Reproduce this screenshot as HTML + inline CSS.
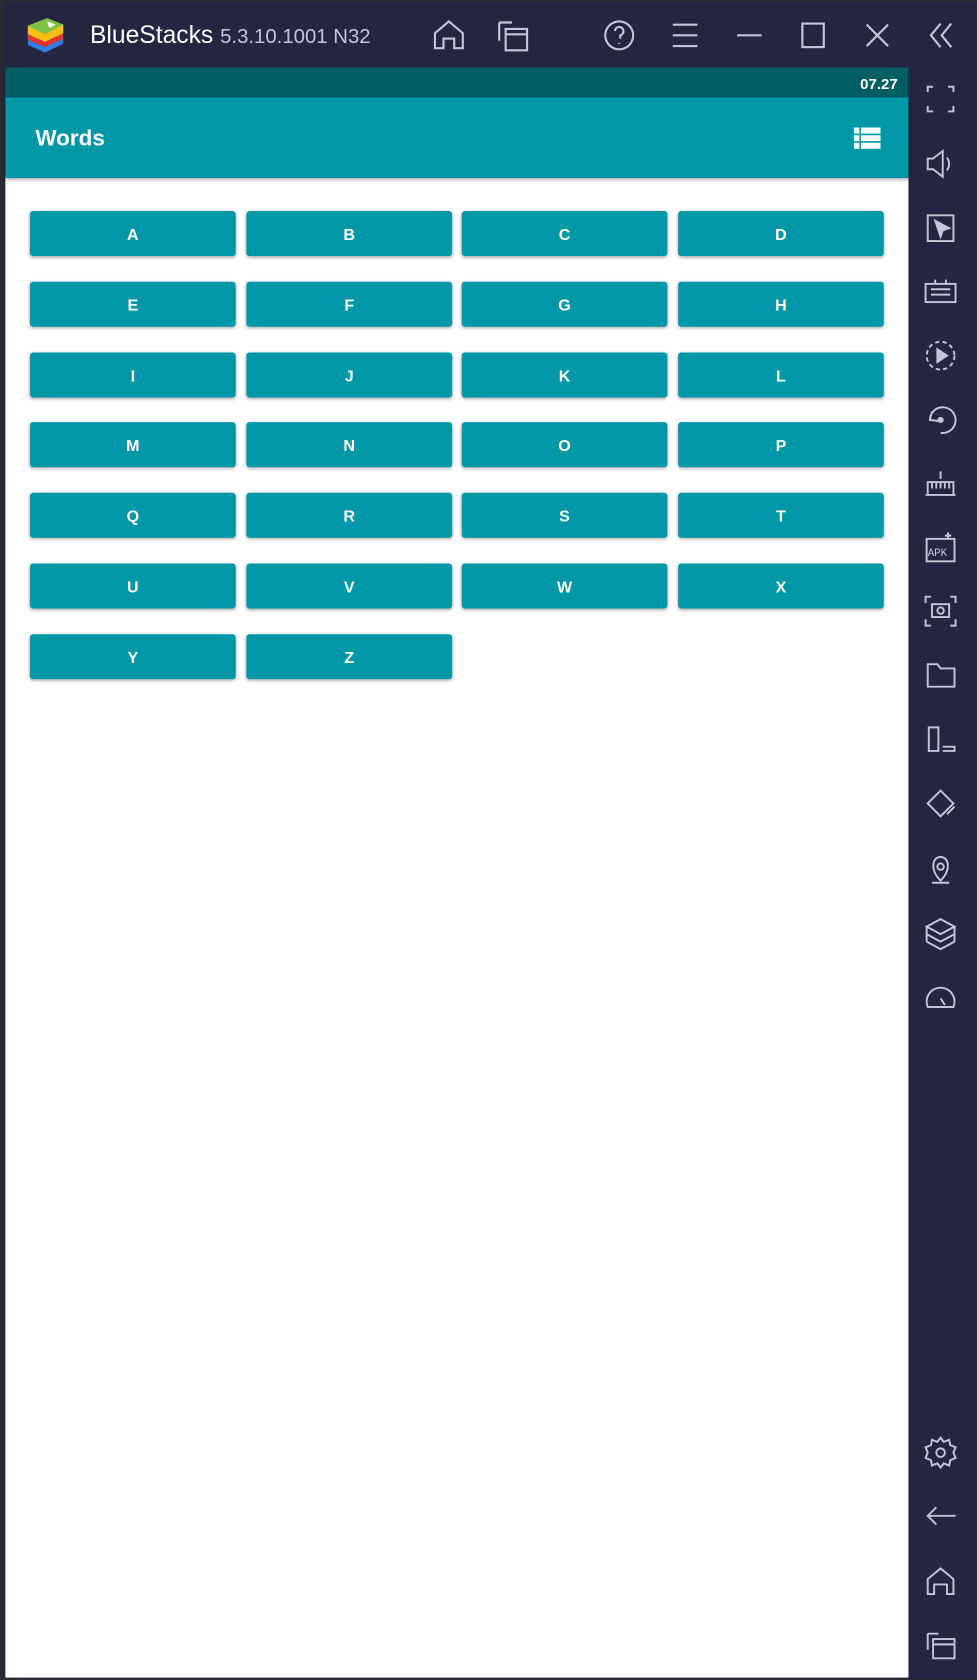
<!DOCTYPE html>
<html><head><meta charset="utf-8"><style>
html,body{margin:0;padding:0;width:977px;height:1679px;overflow:hidden;background:#2a2a30;}
#w{position:absolute;left:0;top:0;width:912px;height:1568px;transform:scale(1.07127);transform-origin:0 0;font-family:"Liberation Sans",sans-serif;}
.win{position:absolute;left:3px;top:2px;width:909px;height:1565px;background:#232541;}
.ic{position:absolute;}
.ic svg{display:block}
.status{position:absolute;left:5px;top:63px;width:843px;height:28px;background:#005f63;color:#fff;font-weight:bold;font-size:14px;text-align:right;line-height:30px;box-sizing:border-box;padding-right:10px;}
.bar{position:absolute;left:5px;top:91px;width:843px;height:75px;background:#0097a7;box-shadow:0 2px 3px rgba(0,0,0,.3);z-index:2}
.bar .t{position:absolute;left:28px;top:27px;color:#fff;font-size:21px;font-weight:bold;}
.content{position:absolute;left:5px;top:166px;width:843px;height:1400px;background:#fff;}
.b{position:absolute;width:192px;height:42px;background:#0097a7;border-radius:3px;box-shadow:0 1px 3px rgba(0,0,0,.35);color:#fff;font-size:15px;font-weight:bold;text-align:center;line-height:46px;}
</style></head><body><div id="w">
<div class="win"></div>
<svg class="ic" style="left:22px;top:14px" width="40" height="38" viewBox="0 0 40 38">
<path d="M4 10 L22 3 L37 9 L37 27 L20 35 L4 28Z" fill="#2e7de0"/>
<path d="M4 10 L22 3 L37 9 L37 22 L20 30 L4 23Z" fill="#e3342f"/>
<path d="M4 10 L22 3 L37 9 L37 17 L20 25 L4 18Z" fill="#f5c013"/>
<path d="M4 10 L22 3 L37 9 L20 18Z" fill="#7cc242"/>
<path d="M22 6 L30 9 L24 12Z" fill="#fff"/>
</svg>
<div style="position:absolute;left:84px;top:19px;color:#fff;font-size:23px;">BlueStacks <span style="font-size:19px;color:#c3c5d6">5.3.10.1001 N32</span></div>
<svg class="ic" style="left:400px;top:12px" width="500" height="42" viewBox="400 12 500 42" fill="none" stroke="#c3c5d6" stroke-width="2">
<path d="M406 45 V31 L419 20 L432 31 V45 H424 V36 H414 V45Z"/>
<path d="M466 21 H478 M466 21 V38 M472 27 H492 V47 H472Z M472 32 H492"/>
<circle cx="578" cy="33" r="13"/><path d="M574 29 a4 4 0 1 1 5 4 v3 M578 40 v1"/>
<path d="M628 23 H651 M628 33 H651 M628 43 H651"/>
<path d="M688 33 H711"/>
<rect x="749" y="22" width="20" height="22"/>
<path d="M809 23 L829 43 M829 23 L809 43"/>
<path d="M878 22 L869 33 L878 44 M888 22 L879 33 L888 44"/>
</svg>
<div class="status">07.27</div>
<div class="bar"><div class="t">Words</div>
<svg class="ic" style="left:792px;top:28px" width="25" height="20" viewBox="0 0 25 20"><rect x="0" y="0" width="25" height="20" fill="#fff"/><path d="M0 6.5H25M0 13.5H25M6 0V20" stroke="#0097a7" stroke-width="1.5"/></svg>
</div>
<div class="content"></div>
<div id="btns"></div>
<svg class="ic" style="left:849px;top:63px" width="63" height="1505" viewBox="849 63 63 1505" fill="none" stroke="#c3c5d6" stroke-width="1.8">
<path d="M866 86 V81 H871 M885 81 H890 V86 M890 99 V104 H885 M871 104 H866 V99"/>
<path d="M866 148 H871 L880 141 V165 L871 158 H866Z M884 147 Q888 153 884 159"/>
<rect x="866" y="201" width="24" height="24"/><path d="M873 206 L886 213 L880 215 L878 221Z" fill="#c3c5d6"/>
<rect x="864" y="265" width="28" height="17"/><path d="M869 270 H887 M869 275 H887 M873 261 V265 M883 261 V265"/>
<circle cx="878" cy="332" r="13" stroke-dasharray="4 3"/><path d="M875 326 L884 332 L875 338Z" fill="#c3c5d6"/>
<path d="M868 392 A12 12 0 1 1 878 404 M870 384 L868 392 L876 393"/><circle cx="878" cy="392" r="2" fill="#c3c5d6"/>
<path d="M864 462 H892 M866 462 V450 H890 V462 M870 450 V456 M874 450 V456 M878 450 V456 M882 450 V456 M886 450 V456 M878 440 V447"/>
<rect x="865" y="503" width="26" height="21"/><text x="866" y="519" font-size="10" fill="#c3c5d6" stroke="none" font-family="Liberation Mono">APK</text><path d="M885 497 V503 M882 500 H888"/>
<path d="M864 563 V557 H869 M887 557 H892 V563 M892 578 V584 H887 M869 584 H864 V578"/><rect x="870" y="564" width="16" height="12"/><circle cx="878" cy="570" r="3"/>
<path d="M866 620 H875 L878 624 H891 V641 H866Z"/>
<path d="M867 679 H876 V701 H867Z M880 697 H891 V701 H880"/>
<path d="M866 750 L878 738 L890 750 L878 762Z M884 760 L891 753"/>
<path d="M878 822 C868 812 870 800 878 800 C886 800 888 812 878 822Z M870 824 H886"/><circle cx="878" cy="809" r="3"/>
<path d="M878 858 L891 865 L878 872 L865 865Z M865 872 L878 879 L891 872 M865 879 L878 886 L891 879 M865 865 V879 M891 865 V879"/>
<path d="M866 940 A13 13 0 1 1 890 940 Z M878 932 L882 938"/>
<circle cx="878" cy="1356" r="4"/><path d="M878 1342 L881 1346 L886 1344 L887 1349 L892 1351 L890 1356 L892 1361 L887 1363 L886 1368 L881 1366 L878 1370 L875 1366 L870 1368 L869 1363 L864 1361 L866 1356 L864 1351 L869 1349 L870 1344 L875 1346Z"/>
<path d="M866 1415 H892 M874 1407 L866 1415 L874 1423"/>
<path d="M866 1488 V1474 L878 1464 L890 1474 V1488 H884 V1479 H872 V1488Z"/>
<path d="M866 1525 H876 M866 1525 V1540 M871 1530 H891 V1548 H871Z M871 1535 H891"/>
</svg>
<script>
var L="ABCDEFGHIJKLMNOPQRSTUVWXYZ",xs=[28,230,431,633],h="";
for(var i=0;i<26;i++){h+='<div class="b" style="left:'+xs[i%4]+'px;top:'+(197+Math.floor(i/4)*65.8)+'px">'+L[i]+'</div>';}
document.getElementById('btns').innerHTML=h;
</script>
</div></body></html>
